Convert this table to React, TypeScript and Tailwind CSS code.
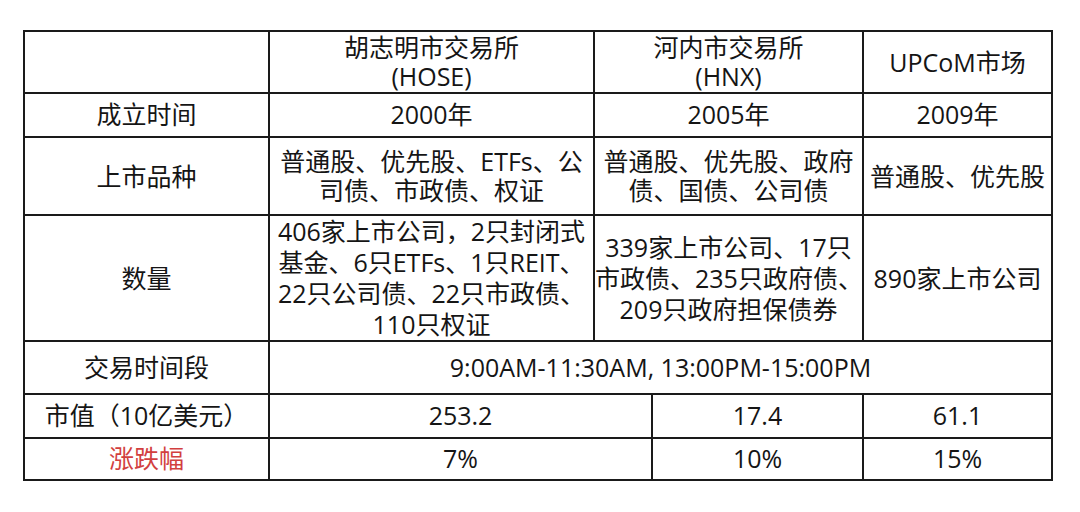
import React from 'react';

const cell = 'border-2 border-[#1a1a1a] text-center align-middle whitespace-nowrap p-0';

export default function App() {
  return (
    <div
      className="min-h-[512px] w-[1080px] bg-white pt-[30px] pl-[23px] text-[#151515] text-[25px]"
      style={{ fontFamily: '"Open Sans", "Noto Sans CJK SC", sans-serif' }}
    >
      <table className="table-fixed border-collapse w-[1028px]">
        <colgroup>
          <col className="w-[245px]" />
          <col className="w-[325px]" />
          <col className="w-[58px]" />
          <col className="w-[211px]" />
          <col className="w-[189px]" />
        </colgroup>
        <tbody>
          <tr className="h-[62px] leading-[29px]">
            <td className={cell}></td>
            <td className={cell}>
              胡志明市交易所
              <br />
              (HOSE)
            </td>
            <td className={cell} colSpan={2}>
              河内市交易所
              <br />
              (HNX)
            </td>
            <td className={cell}>UPCoM市场</td>
          </tr>
          <tr className="h-[44px]">
            <td className={cell}>成立时间</td>
            <td className={cell}>2000年</td>
            <td className={cell} colSpan={2}>2005年</td>
            <td className={cell}>2009年</td>
          </tr>
          <tr className="h-[78px] leading-[29px]">
            <td className={cell}>上市品种</td>
            <td className={cell}>
              普通股、优先股、ETFs、公
              <br />
              司债、市政债、权证
            </td>
            <td className={cell} colSpan={2}>
              普通股、优先股、政府
              <br />
              债、国债、公司债
            </td>
            <td className={cell}>普通股、优先股</td>
          </tr>
          <tr className="h-[124px] leading-[31px]">
            <td className={cell}>数量</td>
            <td className={cell}>
              406家上市公司，2只封闭式
              <br />
              基金、6只ETFs、1只REIT、
              <br />
              22只公司债、22只市政债、
              <br />
              110只权证
            </td>
            <td className={cell} colSpan={2}>
              339家上市公司、17只
              <br />
              市政债、235只政府债、
              <br />
              209只政府担保债券
            </td>
            <td className={cell}>890家上市公司</td>
          </tr>
          <tr className="h-[53px]">
            <td className={cell}>交易时间段</td>
            <td className={cell} colSpan={4}>
              9:00AM-11:30AM, 13:00PM-15:00PM
            </td>
          </tr>
          <tr className="h-[44px]">
            <td className={cell}>市值（10亿美元）</td>
            <td className={cell} colSpan={2}>253.2</td>
            <td className={cell}>17.4</td>
            <td className={cell}>61.1</td>
          </tr>
          <tr className="h-[42px]">
            <td className={`${cell} text-[#d23f3f]`}>涨跌幅</td>
            <td className={cell} colSpan={2}>7%</td>
            <td className={cell}>10%</td>
            <td className={cell}>15%</td>
          </tr>
        </tbody>
      </table>
    </div>
  );
}
